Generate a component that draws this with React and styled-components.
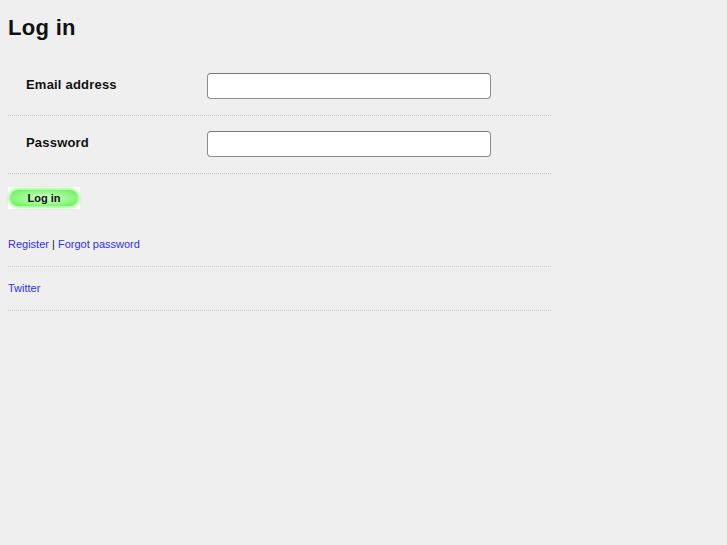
import styled, { createGlobalStyle } from 'styled-components';

const Global = createGlobalStyle`
    html, body {
        margin: 0;
        background: #efefef;
    }
    body {
        padding: 8px 8px;
        font-family: "Liberation Sans", Arial, sans-serif;
        color: #111;
    }
`;

const Page = styled.div`
    width: 543px;
`;

const Title = styled.h1`
    margin: 6px 0 0;
    font-size: 22px;
    font-weight: bold;
    letter-spacing: 0.3px;
    line-height: 28px;
    height: 44px;
`;

const Row = styled.div`
    display: flex;
    align-items: center;
    padding: 15px 0 16px;
    border-bottom: 1px dotted #c8c8c8;
`;

const Label = styled.label`
    width: 181px;
    padding-left: 18px;
    font-size: 13px;
    font-weight: bold;
    letter-spacing: 0.2px;
    margin-top: -4px;
`;

const Input = styled.input`
    box-sizing: border-box;
    width: 284px;
    height: 26px;
    margin: 0;
    background: #fff;
    border: 1px solid #8c8c8c;
    border-top-color: #777;
    border-radius: 4px;
    outline: none;
`;

const ButtonBar = styled.div`
    padding: 13px 0 0;
`;

const GlowButton = styled.button`
    width: 72px;
    height: 22px;
    padding: 3px 2px;
    border: 0;
    background: #fff;
    display: block;
    cursor: pointer;
`;

const Pill = styled.span`
    display: flex;
    align-items: center;
    justify-content: center;
    height: 16px;
    border-radius: 8px;
    background: radial-gradient(ellipse at center, #d4ffce 0%, #9cf990 50%, #5cf04c 100%);
    box-shadow: 0 0 3px 2px #a6f89c;
    font-family: "Liberation Sans", Arial, sans-serif;
    font-size: 11px;
    font-weight: bold;
    color: #111;
`;

const LinkRow = styled.div`
    padding: ${(p) => p.top}px 0 ${(p) => p.bottom}px;
    border-bottom: 1px dotted #cdcdcd;
    font-size: 11px;
    line-height: 14px;
    color: #222;
`;

const Link = styled.a`
    color: #2f2fe8;
    text-decoration: none;
`;

const App = () => (
    <Page>
        <Global />
        <Title>Log in</Title>
        <Row>
            <Label>Email address</Label>
            <Input type="text" />
        </Row>
        <Row>
            <Label>Password</Label>
            <Input type="password" />
        </Row>
        <ButtonBar>
            <GlowButton>
                <Pill>Log in</Pill>
            </GlowButton>
        </ButtonBar>
        <LinkRow top={28} bottom={15}>
            <Link href="#">Register</Link> | <Link href="#">Forgot password</Link>
        </LinkRow>
        <LinkRow top={14} bottom={15}>
            <Link href="#">Twitter</Link>
        </LinkRow>
    </Page>
);

export default App;
